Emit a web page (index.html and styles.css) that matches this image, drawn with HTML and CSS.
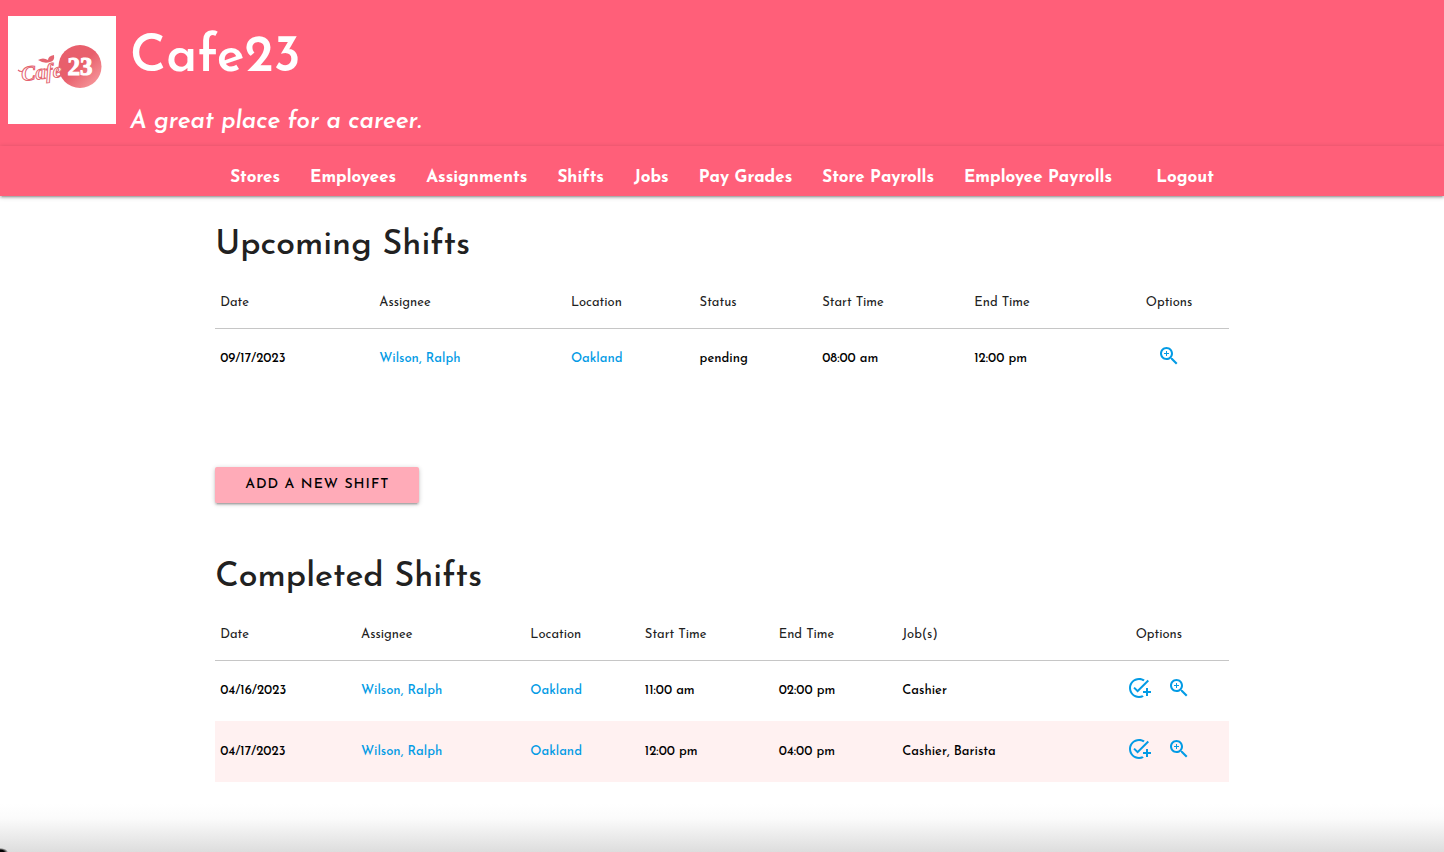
FILE: index.html
```html
<!DOCTYPE html>
<html lang="en">
<head>
<meta charset="utf-8">
<title>Cafe23</title>
<link rel="stylesheet" href="styles.css">
</head>
<body>
<svg class="defs" aria-hidden="true">
  <symbol id="zoom-in" viewBox="0 0 24 24"><path d="M15.5 14h-.79l-.28-.27C15.41 12.59 16 11.11 16 9.5 16 5.91 13.09 3 9.5 3S3 5.91 3 9.5 5.91 16 9.5 16c1.61 0 3.09-.59 4.23-1.57l.27.28v.79l5 4.99L20.49 19l-4.99-5zm-6 0C7.01 14 5 11.99 5 9.5S7.01 5 9.5 5 14 7.01 14 9.5 11.99 14 9.5 14zM12 10h-2v2H9v-2H7V9h2V7h1v2h2v1z"/></symbol>
  <symbol id="add-task" viewBox="0 0 24 24"><path d="M22 5.18 10.59 16.6l-4.24-4.24 1.41-1.41 2.83 2.83 10-10L22 5.18zM12 20c-4.41 0-8-3.59-8-8s3.59-8 8-8c1.57 0 3.04.46 4.28 1.25l1.45-1.45C16.1 2.67 14.13 2 12 2 6.48 2 2 6.48 2 12s4.48 10 10 10c1.73 0 3.36-.44 4.78-1.22l-1.5-1.5c-1 .46-2.11.72-3.28.72zm7-5h-3v2h3v3h2v-3h3v-2h-3v-3h-2v3z"/></symbol>
</svg>

<header class="banner">
  <svg class="logo" viewBox="0 0 108 108" role="img" aria-label="Cafe 23 logo">
    <defs>
      <linearGradient id="disc" x1="0.2" y1="0.2" x2="0.9" y2="0.95">
        <stop offset="0.4" stop-color="#e85f6c"/><stop offset="1" stop-color="#f79a9d"/>
      </linearGradient>
    </defs>
    <rect width="108" height="108" fill="#fff"/>
    <circle cx="72" cy="50.5" r="21.5" fill="url(#disc)"/>
    <text class="logo-number" x="72" y="59" text-anchor="middle">23</text>
    <path d="M10 54q3 3 7 0" fill="none" stroke="#e46470" stroke-width="1.2"/>
    <text class="logo-script" x="14" y="65" transform="rotate(-6 14 65)">Cafe</text>
    <path d="M30 44q5-3 10 0q0-4 6-5q1 6-4 7q-6 2-12-2z" fill="#e46470"/>
  </svg>
  <div class="brand">
    <h1 class="brand-name">Cafe23</h1>
    <p class="tagline">A great place for a career.</p>
  </div>
</header>

<nav class="navbar">
  <ul class="nav-list container">
    <li><a href="#">Stores</a></li>
    <li><a href="#">Employees</a></li>
    <li><a href="#">Assignments</a></li>
    <li><a href="#">Shifts</a></li>
    <li><a href="#">Jobs</a></li>
    <li><a href="#">Pay Grades</a></li>
    <li><a href="#">Store Payrolls</a></li>
    <li><a href="#">Employee Payrolls</a></li>
    <li class="nav-end"><a href="#">Logout</a></li>
  </ul>
</nav>

<main class="container content">
  <section class="upcoming">
    <h2>Upcoming Shifts</h2>
    <table class="shifts">
      <colgroup><col class="u-date"><col class="u-assignee"><col class="u-location"><col class="u-status"><col class="u-start"><col class="u-end"><col class="u-options"></colgroup>
      <thead><tr><th>Date</th><th>Assignee</th><th>Location</th><th>Status</th><th>Start Time</th><th>End Time</th><th class="options">Options</th></tr></thead>
      <tbody>
        <tr><td>09/17/2023</td><td><a href="#">Wilson, Ralph</a></td><td><a href="#">Oakland</a></td><td>pending</td><td>08:00 am</td><td>12:00 pm</td>
          <td class="options"><div class="actions"><a href="#" aria-label="View shift"><svg class="icon"><use href="#zoom-in"/></svg></a></div></td></tr>
      </tbody>
    </table>
    <button class="btn" type="button">ADD A NEW SHIFT</button>
  </section>

  <section>
    <h2>Completed Shifts</h2>
    <table class="shifts">
      <colgroup><col class="c-date"><col class="c-assignee"><col class="c-location"><col class="c-start"><col class="c-end"><col class="c-jobs"><col class="c-options"></colgroup>
      <thead><tr><th>Date</th><th>Assignee</th><th>Location</th><th>Start Time</th><th>End Time</th><th>Job(s)</th><th class="options">Options</th></tr></thead>
      <tbody>
        <tr><td>04/16/2023</td><td><a href="#">Wilson, Ralph</a></td><td><a href="#">Oakland</a></td><td>11:00 am</td><td>02:00 pm</td><td>Cashier</td>
          <td class="options"><div class="actions"><a href="#" aria-label="Add job"><svg class="icon"><use href="#add-task"/></svg></a><a href="#" aria-label="View shift"><svg class="icon"><use href="#zoom-in"/></svg></a></div></td></tr>
        <tr><td>04/17/2023</td><td><a href="#">Wilson, Ralph</a></td><td><a href="#">Oakland</a></td><td>12:00 pm</td><td>04:00 pm</td><td>Cashier, Barista</td>
          <td class="options"><div class="actions"><a href="#" aria-label="Add job"><svg class="icon"><use href="#add-task"/></svg></a><a href="#" aria-label="View shift"><svg class="icon"><use href="#zoom-in"/></svg></a></div></td></tr>
      </tbody>
    </table>
  </section>
</main>
<footer class="page-end"></footer>
</body>
</html>
```
FILE: styles.css
```css
* { box-sizing: border-box; }

body {
  margin: 0;
  min-height: 100vh;
  display: flex;
  flex-direction: column;
  background: #fff;
  color: #000;
  font-family: "Josefin Sans", Lato, "Open Sans", sans-serif;
  font-size: 13px;
  line-height: 20px;
}

a { color: #039be5; text-decoration: none; }
h1, h2, p, ul { margin: 0; padding: 0; font-weight: 500; }
.defs { display: none; }
.container { width: 70.2%; margin: 0 auto; }

.banner {
  display: flex;
  gap: 14px;
  padding: 16px 8px 8px;
  background: #ff5f79;
  color: #fff;
}
.logo { width: 108px; height: 108px; flex: none; }
.logo-number { font: bold 25px "Liberation Serif", serif; fill: #fff; stroke: #fff; stroke-width: 1px; }
.logo-script { font: italic bold 21px "Liberation Serif", serif; fill: #fff; stroke: #e46470; stroke-width: 1px; }
.brand { display: flex; flex-direction: column; gap: 12px; padding-top: 6px; }
.brand-name { font-size: 52px; line-height: 72px; font-weight: 600; }
.tagline { font-size: 24px; line-height: 32px; font-style: italic; font-weight: 600; }

.navbar {
  position: relative;
  background: #ff5f79;
  box-shadow: 0 2px 2px 0 rgba(0,0,0,.14), 0 3px 1px -2px rgba(0,0,0,.12), 0 1px 5px 0 rgba(0,0,0,.2);
}
.nav-list { display: flex; list-style: none; }
.nav-list a { display: block; padding: 14px 15px 0; color: #fff; font-size: 17px; line-height: 36px; font-weight: 700; white-space: nowrap; }
.nav-end { margin-left: auto; }

.content { padding-top: 26px; }
h2 { color: #212121; font-size: 34px; line-height: 48px; }
.shifts { width: 100%; table-layout: fixed; border-collapse: collapse; }
.shifts th, .shifts td { padding: 0 5px; text-align: left; font-weight: 500; }
.shifts th { height: 58px; padding-top: 8px; color: #212121; font-weight: 400; }
.shifts thead { border-bottom: 1px solid #c6c6c6; }
.shifts td { height: 61px; }
.shifts tbody tr:nth-child(even) { background: #fff1f1; }
.shifts .options { text-align: center; }
.actions { display: flex; justify-content: center; gap: 16px; padding-bottom: 6px; }
.icon { display: block; width: 24px; height: 24px; fill: currentColor; }

.u-date { width: 15.7%; } .u-assignee { width: 18.9%; } .u-location { width: 12.7%; }
.u-status { width: 12.1%; } .u-start { width: 15%; } .u-end { width: 13.8%; } .u-options { width: 11.8%; }
.c-date { width: 13.9%; } .c-assignee { width: 16.7%; } .c-location { width: 11.3%; }
.c-start { width: 13.2%; } .c-end { width: 12.2%; } .c-jobs { width: 18.9%; } .c-options { width: 13.8%; }

.upcoming { margin-bottom: 51px; }
.btn {
  display: block;
  margin-top: 78px;
  padding: 0 30px;
  height: 36px;
  border: 0;
  border-radius: 2px;
  background: #ffabb8;
  color: #000;
  font: 500 14px/32px "Josefin Sans", Lato, "Open Sans", sans-serif;
  letter-spacing: 1px;
  box-shadow: 0 2px 2px 0 rgba(0,0,0,.14), 0 3px 1px -2px rgba(0,0,0,.12), 0 1px 5px 0 rgba(0,0,0,.2);
}

.page-end {
  height: 48px;
  margin-top: auto;
  background:
    radial-gradient(ellipse 8px 4px at 0 100%, #000 50%, transparent),
    linear-gradient(#fff, #fbfbfb 30%, #ddd);
}
```
